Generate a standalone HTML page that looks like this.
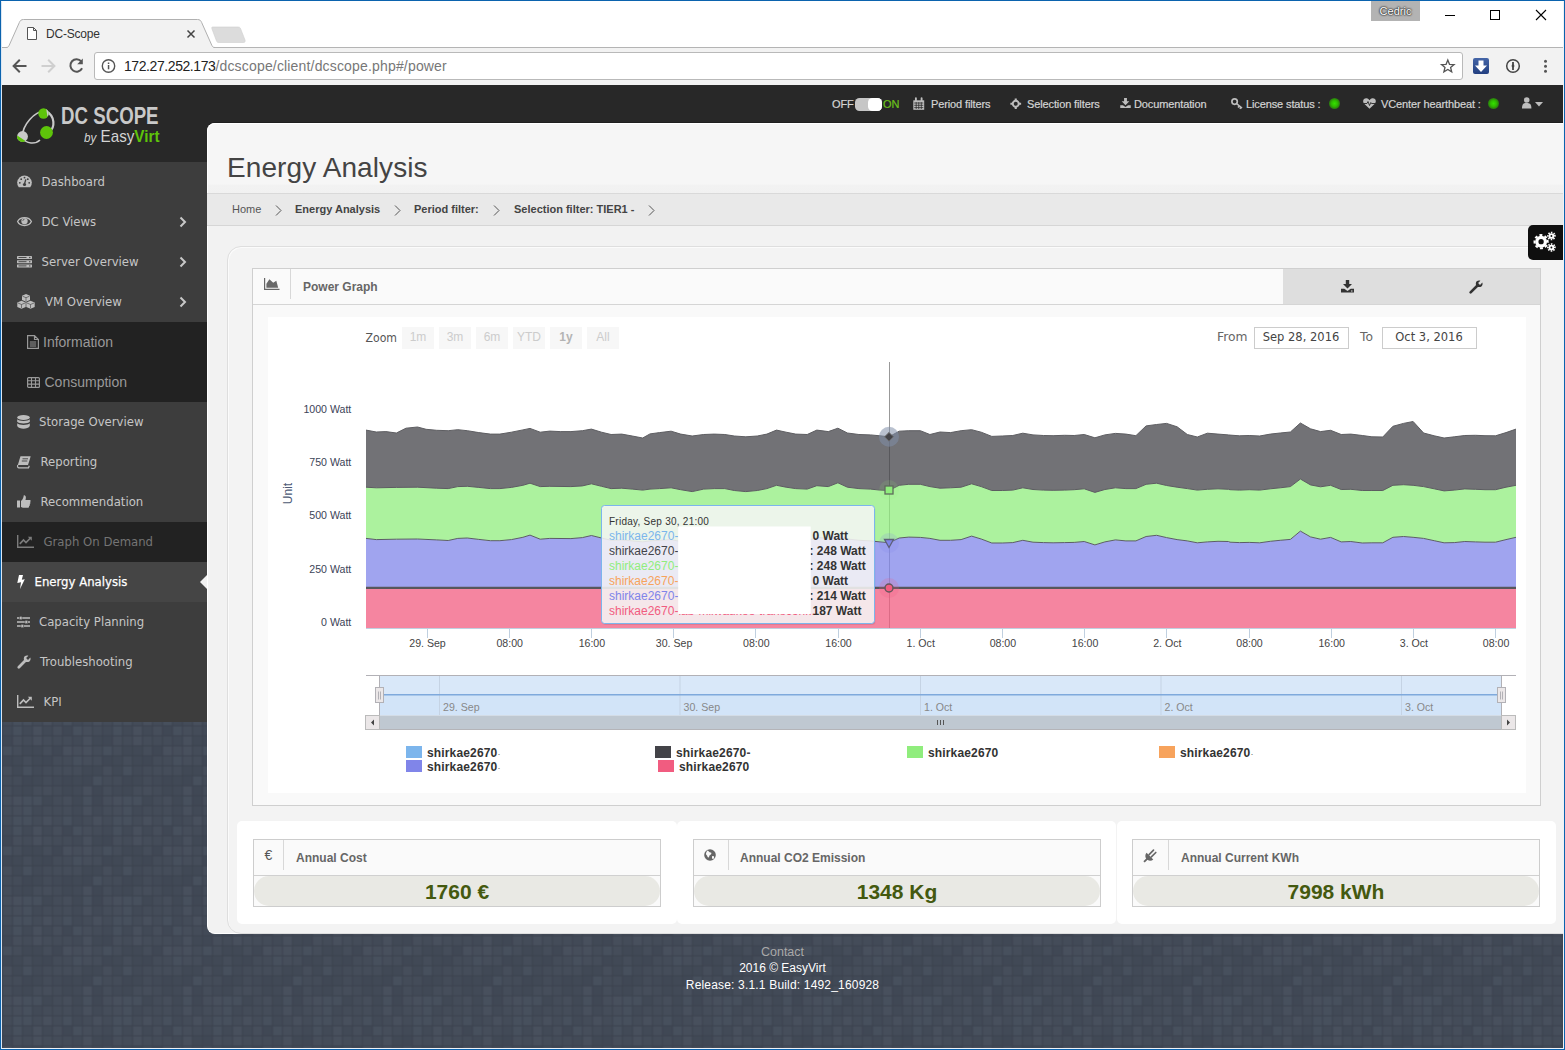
<!DOCTYPE html>
<html lang="en">
<head>
<meta charset="utf-8">
<title>DC-Scope</title>
<style>
*{box-sizing:border-box;margin:0;padding:0}
html,body{width:1565px;height:1050px;overflow:hidden;background:#434b58}
body{position:relative;font-family:"Liberation Sans",Arial,sans-serif;font-size:12px;color:#444}
.abs{position:absolute}
svg{display:block;overflow:visible}
#bgpat{position:absolute;left:0;top:0;width:1565px;height:1050px}
/* window frame */
#frame{position:absolute;left:0;top:0;width:1565px;height:1050px;border:1px solid #0b63ae;pointer-events:none;z-index:50}
#frame2{position:absolute;left:1px;top:1px;width:1563px;height:1048px;border:1px solid #eef2f7;border-left-color:#dbe7f3;border-top-color:transparent;pointer-events:none;z-index:49}
/* chrome */
#titlebar{position:absolute;left:1px;top:1px;width:1563px;height:46px;background:#fff}
#tabline{position:absolute;left:1px;top:47px;width:1563px;height:1px;background:#b4b4b4}
#toolbar{position:absolute;left:1px;top:48px;width:1563px;height:37px;background:#f2f2f2}
#urlbox{position:absolute;left:94px;top:52px;width:1369px;height:28px;background:#fff;border:1px solid #b9b9b9;border-radius:3px}
#url{position:absolute;left:124px;top:58px;font-size:14px;line-height:16px;color:#777;white-space:nowrap}
#url b{font-weight:normal;color:#222;letter-spacing:-0.42px}#url{letter-spacing:0.17px}
#tabtitle{position:absolute;left:46px;top:27px;font-size:12px;line-height:15px;letter-spacing:-0.2px;color:#333;white-space:nowrap}
#user{position:absolute;left:1371px;top:1px;width:49px;height:20px;background:#b3b3b3;color:#fff;font-size:11px;line-height:20px;text-align:center;text-shadow:0 0 2px #222,0 0 2px #333,0 0 1px #222}
/* app */
#header{position:absolute;left:2px;top:85px;width:1561px;height:52px;background:#282828}
#logo{position:absolute;left:2px;top:85px;width:205px;height:77px;background:#282828}
#sidebar{position:absolute;left:2px;top:162px;width:205px;height:560px;background:#3d3d3d}
.mi{position:absolute;left:0;width:205px;height:40px;color:#c6c6c6;font-family:"DejaVu Sans Condensed","DejaVu Sans",sans-serif;font-size:13px;line-height:40px;white-space:nowrap}
.mi span{position:absolute;top:0}
.mi svg{position:absolute}
.mi.dark{background:#222;color:#747474}
.mi.sub{background:#222;color:#999;font-family:"Liberation Sans",Arial,sans-serif;font-size:14px;letter-spacing:0}
.mi.act{background:#454545;color:#fff;-webkit-text-stroke:0.25px #fff}
.chev{position:absolute;left:177px;top:14px}
/* top nav */
.tn{position:absolute;top:97px;font-size:11px;line-height:14px;color:#d4d4d4;white-space:nowrap;letter-spacing:-0.12px;-webkit-text-stroke:0.2px #d4d4d4}
.dot{position:absolute;top:98px;width:11px;height:11px;border-radius:50%;background:radial-gradient(circle at 50% 50%,#35e000 0,#2ebc00 38%,#2a7410 72%,#2a3a1e 100%)}
/* content */
#content{position:absolute;left:207px;top:123px;width:1356px;height:811px;background:#f2f2f2;border-radius:8px 0 0 8px;border:1px solid #fff;border-right:0;box-shadow:0 -1px 0 rgba(25,25,25,0.6)}
#pagehead{position:absolute;left:-1px;top:-1px;width:1357px;height:71px;border-radius:8px 0 0 0;border-left:1px solid #fff;border-top:1px solid #fff;background:linear-gradient(#f6f6f6 0,#f6f6f6 86%,#f2f2f2 87%,#f1f1f1 100%)}
#pagehead h1{position:absolute;left:19px;top:28px;font-size:28px;line-height:32px;letter-spacing:0.1px;font-weight:normal;color:#444;white-space:nowrap}
#crumbs{position:absolute;left:-1px;top:69px;width:1357px;height:33px;background:#e9e9e9;border-top:1px solid #d9d9d9;border-bottom:1px solid #d6d6d6}
.cr{position:absolute;top:9px;font-size:11px;line-height:13px;color:#555;white-space:nowrap}
.cr.b{font-weight:bold;color:#444}
.crs{position:absolute;top:11px}
#box{position:absolute;left:19px;top:122px;box-shadow:inset 1px 1px 0 #fbfbfb;width:1350px;height:688px;border:1px solid #dedede;border-radius:14px 0 0 14px;background:#f3f3f3}
#panel{position:absolute;left:44px;top:144px;width:1289px;height:538px;border:1px solid #cfcfcf;background:#f9f9f9}
#phead{position:absolute;left:0;top:0;width:1287px;height:36px;background:#fafafa;border-bottom:1px solid #d5d5d5}
#phead .sep{position:absolute;left:37px;top:0;width:1px;height:30px;background:#d8d8d8}
#phead .ttl{position:absolute;left:50px;top:11px;font-size:12px;line-height:15px;font-weight:bold;color:#666}
#ptools{position:absolute;left:1030px;top:0;width:257px;height:35px;background:#dedede}
#chartbg{position:absolute;left:15px;top:48px;width:1258px;height:476px;background:#fff}
.stat{position:absolute;top:697px;height:103px;background:#fff;border-radius:5px}
.sbox{position:absolute;left:16px;top:18px;width:408px;height:68px;border:1px solid #cdcdcd;background:#fafafa}
.sbox .sep{position:absolute;left:29px;top:0;width:1px;height:30px;background:#d8d8d8}
.sbox .ttl{position:absolute;left:42px;top:11px;font-size:12px;line-height:15px;font-weight:bold;color:#666;white-space:nowrap}
.sbox .hr{position:absolute;left:0;top:35px;width:406px;height:1px;background:#d0d0d0}
.sbox .pill{position:absolute;left:0;top:36px;width:406px;height:30px;border-radius:15px;background:#e9e9e4;text-align:center;font-size:21px;line-height:31px;font-weight:bold;color:#44590f}
.foot{position:absolute;left:0;width:1565px;text-align:center;font-size:12px;line-height:15px;color:#fff;white-space:nowrap}
#gear{position:absolute;left:1528px;top:225px;width:35px;height:35px;background:#0f0f0f;border-radius:5px 0 0 5px}
/* chart text */
#chart text{font-family:"Liberation Sans",Arial,sans-serif}
#chart text.dj{font-family:"DejaVu Sans",Verdana,sans-serif}
</style>
</head>
<body>
<svg id="bgpat" width="1565" height="1050"><defs><pattern id="tiles" x="2.5" y="5.8" width="100" height="100" patternUnits="userSpaceOnUse"><rect width="100" height="100" fill="#3b424e"/><g><rect x="0.5" y="0.5" width="9" height="9" fill="#454d5a"/><rect x="10.5" y="0.5" width="9" height="9" fill="#464e5b"/><rect x="20.5" y="0.5" width="9" height="9" fill="#47505d"/><rect x="30.5" y="0.5" width="9" height="9" fill="#424a57"/><rect x="40.5" y="0.5" width="9" height="9" fill="#444c59"/><rect x="50.5" y="0.5" width="9" height="9" fill="#444c59"/><rect x="60.5" y="0.5" width="9" height="9" fill="#454d5a"/><rect x="70.5" y="0.5" width="9" height="9" fill="#424a57"/><rect x="80.5" y="0.5" width="9" height="9" fill="#48505d"/><rect x="90.5" y="0.5" width="9" height="9" fill="#424a57"/><rect x="0.5" y="10.5" width="9" height="9" fill="#444c59"/><rect x="10.5" y="10.5" width="9" height="9" fill="#47505d"/><rect x="20.5" y="10.5" width="9" height="9" fill="#47505d"/><rect x="30.5" y="10.5" width="9" height="9" fill="#444c59"/><rect x="40.5" y="10.5" width="9" height="9" fill="#48505d"/><rect x="50.5" y="10.5" width="9" height="9" fill="#444c59"/><rect x="60.5" y="10.5" width="9" height="9" fill="#47505d"/><rect x="70.5" y="10.5" width="9" height="9" fill="#424a57"/><rect x="80.5" y="10.5" width="9" height="9" fill="#444c59"/><rect x="90.5" y="10.5" width="9" height="9" fill="#48505d"/><rect x="0.5" y="20.5" width="9" height="9" fill="#424a57"/><rect x="10.5" y="20.5" width="9" height="9" fill="#47505d"/><rect x="20.5" y="20.5" width="9" height="9" fill="#424a57"/><rect x="30.5" y="20.5" width="9" height="9" fill="#48505d"/><rect x="40.5" y="20.5" width="9" height="9" fill="#424a57"/><rect x="50.5" y="20.5" width="9" height="9" fill="#464e5b"/><rect x="60.5" y="20.5" width="9" height="9" fill="#404855"/><rect x="70.5" y="20.5" width="9" height="9" fill="#47505d"/><rect x="80.5" y="20.5" width="9" height="9" fill="#464e5b"/><rect x="90.5" y="20.5" width="9" height="9" fill="#444c59"/><rect x="0.5" y="30.5" width="9" height="9" fill="#404855"/><rect x="10.5" y="30.5" width="9" height="9" fill="#464e5b"/><rect x="20.5" y="30.5" width="9" height="9" fill="#444c59"/><rect x="30.5" y="30.5" width="9" height="9" fill="#48505d"/><rect x="40.5" y="30.5" width="9" height="9" fill="#454d5a"/><rect x="50.5" y="30.5" width="9" height="9" fill="#444c59"/><rect x="60.5" y="30.5" width="9" height="9" fill="#444c59"/><rect x="70.5" y="30.5" width="9" height="9" fill="#424a57"/><rect x="80.5" y="30.5" width="9" height="9" fill="#48505d"/><rect x="90.5" y="30.5" width="9" height="9" fill="#414956"/><rect x="0.5" y="40.5" width="9" height="9" fill="#47505d"/><rect x="10.5" y="40.5" width="9" height="9" fill="#454d5a"/><rect x="20.5" y="40.5" width="9" height="9" fill="#414956"/><rect x="30.5" y="40.5" width="9" height="9" fill="#414956"/><rect x="40.5" y="40.5" width="9" height="9" fill="#454d5a"/><rect x="50.5" y="40.5" width="9" height="9" fill="#404855"/><rect x="60.5" y="40.5" width="9" height="9" fill="#48505d"/><rect x="70.5" y="40.5" width="9" height="9" fill="#464e5b"/><rect x="80.5" y="40.5" width="9" height="9" fill="#48505d"/><rect x="90.5" y="40.5" width="9" height="9" fill="#444c59"/><rect x="0.5" y="50.5" width="9" height="9" fill="#404855"/><rect x="10.5" y="50.5" width="9" height="9" fill="#414956"/><rect x="20.5" y="50.5" width="9" height="9" fill="#454d5a"/><rect x="30.5" y="50.5" width="9" height="9" fill="#414956"/><rect x="40.5" y="50.5" width="9" height="9" fill="#404855"/><rect x="50.5" y="50.5" width="9" height="9" fill="#444c59"/><rect x="60.5" y="50.5" width="9" height="9" fill="#444c59"/><rect x="70.5" y="50.5" width="9" height="9" fill="#47505d"/><rect x="80.5" y="50.5" width="9" height="9" fill="#464e5b"/><rect x="90.5" y="50.5" width="9" height="9" fill="#454d5a"/><rect x="0.5" y="60.5" width="9" height="9" fill="#464e5b"/><rect x="10.5" y="60.5" width="9" height="9" fill="#414956"/><rect x="20.5" y="60.5" width="9" height="9" fill="#47505d"/><rect x="30.5" y="60.5" width="9" height="9" fill="#424a57"/><rect x="40.5" y="60.5" width="9" height="9" fill="#444c59"/><rect x="50.5" y="60.5" width="9" height="9" fill="#454d5a"/><rect x="60.5" y="60.5" width="9" height="9" fill="#454d5a"/><rect x="70.5" y="60.5" width="9" height="9" fill="#454d5a"/><rect x="80.5" y="60.5" width="9" height="9" fill="#414956"/><rect x="90.5" y="60.5" width="9" height="9" fill="#414956"/><rect x="0.5" y="70.5" width="9" height="9" fill="#444c59"/><rect x="10.5" y="70.5" width="9" height="9" fill="#444c59"/><rect x="20.5" y="70.5" width="9" height="9" fill="#404855"/><rect x="30.5" y="70.5" width="9" height="9" fill="#414956"/><rect x="40.5" y="70.5" width="9" height="9" fill="#444c59"/><rect x="50.5" y="70.5" width="9" height="9" fill="#424a57"/><rect x="60.5" y="70.5" width="9" height="9" fill="#404855"/><rect x="70.5" y="70.5" width="9" height="9" fill="#414956"/><rect x="80.5" y="70.5" width="9" height="9" fill="#404855"/><rect x="90.5" y="70.5" width="9" height="9" fill="#47505d"/><rect x="0.5" y="80.5" width="9" height="9" fill="#454d5a"/><rect x="10.5" y="80.5" width="9" height="9" fill="#424a57"/><rect x="20.5" y="80.5" width="9" height="9" fill="#414956"/><rect x="30.5" y="80.5" width="9" height="9" fill="#454d5a"/><rect x="40.5" y="80.5" width="9" height="9" fill="#464e5b"/><rect x="50.5" y="80.5" width="9" height="9" fill="#444c59"/><rect x="60.5" y="80.5" width="9" height="9" fill="#414956"/><rect x="70.5" y="80.5" width="9" height="9" fill="#424a57"/><rect x="80.5" y="80.5" width="9" height="9" fill="#48505d"/><rect x="90.5" y="80.5" width="9" height="9" fill="#404855"/><rect x="0.5" y="90.5" width="9" height="9" fill="#464e5b"/><rect x="10.5" y="90.5" width="9" height="9" fill="#48505d"/><rect x="20.5" y="90.5" width="9" height="9" fill="#47505d"/><rect x="30.5" y="90.5" width="9" height="9" fill="#47505d"/><rect x="40.5" y="90.5" width="9" height="9" fill="#414956"/><rect x="50.5" y="90.5" width="9" height="9" fill="#444c59"/><rect x="60.5" y="90.5" width="9" height="9" fill="#464e5b"/><rect x="70.5" y="90.5" width="9" height="9" fill="#414956"/><rect x="80.5" y="90.5" width="9" height="9" fill="#47505d"/><rect x="90.5" y="90.5" width="9" height="9" fill="#404855"/></g></pattern></defs><rect width="1565" height="1050" fill="url(#tiles)"/></svg>

<!-- BROWSER CHROME -->
<div id="titlebar"></div>
<div id="tabline"></div>
<div id="toolbar"></div>
<svg class="abs" style="left:0;top:0" width="1565" height="90" viewBox="0 0 1565 90">
  <!-- tab -->
  <path d="M6 47.500 C7.600 47.500 8.400 47 9.100 45.500 L19.300 22.600 C20.200 20.500 21.200 19.500 23.500 19.500 L197.500 19.500 C199.800 19.500 200.800 20.500 201.700 22.600 L211.900 45.500 C212.600 47 213.400 47.500 215 47.500 L215 48.500 L6 48.500 Z" fill="#f2f2f2" stroke="none"/>
  <path d="M2 47.500 L6 47.500 C7.600 47.500 8.400 47 9.100 45.500 L19.300 22.600 C20.200 20.500 21.200 19.500 23.500 19.500 L197.500 19.500 C199.800 19.500 200.800 20.500 201.700 22.600 L211.900 45.500 C212.600 47 213.400 47.500 215 47.500" fill="none" stroke="#b0b0b0" stroke-width="1"/>
  <!-- new tab button -->
  <path d="M212.5 27 L238 27 C239.500 27 240 27.500 240.500 28.500 L245 40 C245.500 41.500 245 42.500 243.500 42.500 L219 42.500 C217.500 42.500 217 42 216.500 41 L212 29 C211.500 27.500 211.800 27 212.500 27 Z" fill="#dcdcdc" stroke="#cfcfcf" stroke-width="0.6"/>
  <!-- page icon -->
  <path d="M27.500 27.500 L33.500 27.500 L36.500 30.500 L36.500 39.500 L27.500 39.500 Z M33.500 27.500 L33.500 30.500 L36.500 30.500" fill="#fff" stroke="#555" stroke-width="1"/>
  <!-- tab close -->
  <path d="M187.500 30.500 L194.500 37.500 M194.500 30.500 L187.500 37.500" stroke="#444" stroke-width="1.5" fill="none"/>
  <!-- window controls -->
  <path d="M1445 15.500 H1455" stroke="#000" stroke-width="1"/>
  <rect x="1490.500" y="10.500" width="9" height="9" fill="none" stroke="#000" stroke-width="1"/>
  <path d="M1536 10 L1546 20 M1546 10 L1536 20" stroke="#000" stroke-width="1.100"/>
  <!-- nav arrows -->
  <path d="M26.500 66 H13.800 M19.800 59.800 L13.600 66 L19.800 72.200" fill="none" stroke="#555" stroke-width="2"/>
  <path d="M41.500 66 H54.200 M48.200 59.800 L54.400 66 L48.200 72.200" fill="none" stroke="#cfcfcf" stroke-width="2"/>
  <path d="M81.300 61.400 A6.200 6.200 0 1 0 82.100 68.300" fill="none" stroke="#555" stroke-width="2"/>
  <path d="M82.800 58.600 V64.200 H77.200 Z" fill="#555"/>
</svg>
<div id="tabtitle">DC-Scope</div>
<div id="user">Cedric</div>
<div id="urlbox"></div>
<svg class="abs" style="left:0;top:48px" width="1565" height="37" viewBox="0 48 1565 37">
  <circle cx="108.500" cy="66" r="6.200" fill="none" stroke="#555" stroke-width="1.400"/>
  <rect x="107.800" y="65" width="1.500" height="4.300" fill="#555"/><rect x="107.800" y="62.500" width="1.500" height="1.500" fill="#555"/>
  <path d="M1447.8 60.0 L1449.5 64.3 L1454.1 64.6 L1450.6 67.5 L1451.7 71.9 L1447.8 69.5 L1443.9 71.9 L1445.0 67.5 L1441.5 64.6 L1446.1 64.3 Z" fill="none" stroke="#555" stroke-width="1.300" stroke-linejoin="miter"/>
  <defs><linearGradient id="dlg" x1="0" y1="0" x2="0" y2="1"><stop offset="0" stop-color="#4566a8"/><stop offset="1" stop-color="#223f80"/></linearGradient></defs>
  <rect x="1473" y="58" width="16" height="16" rx="2" fill="url(#dlg)"/>
  <path d="M1478.500 60.500 H1483.500 V65.500 H1487 L1481 72 L1475 65.500 H1478.500 Z" fill="#fff"/>
  <circle cx="1513" cy="66" r="6.300" fill="none" stroke="#444" stroke-width="1.500"/>
  <path d="M1513 62 V70" stroke="#444" stroke-width="1.800"/><circle cx="1513" cy="66" r="1.400" fill="#444"/>
  <circle cx="1545.500" cy="61.200" r="1.500" fill="#555"/><circle cx="1545.500" cy="66.200" r="1.500" fill="#555"/><circle cx="1545.500" cy="71.200" r="1.500" fill="#555"/>
</svg>
<div id="url"><b>172.27.252.173</b>/dcscope/client/dcscope.php#/power</div>

<!-- APP HEADER -->
<div id="header"></div>
<div id="logo"></div>
<svg class="abs" style="left:14px;top:104px" width="44" height="44" viewBox="0 0 44 44">
  <path d="M8 33 C9 20 20 8 31 6.500" fill="none" stroke="#c9c9c9" stroke-width="1.600"/>
  <path d="M31 6.500 C42 12 41 24 35 28" fill="none" stroke="#c9c9c9" stroke-width="2.200"/>
  <path d="M8 33 C12 41 22 40 26 36" fill="none" stroke="#c9c9c9" stroke-width="1.600"/>
  <circle cx="29.500" cy="9.500" r="5.200" fill="#5ec40a"/>
  <path d="M32.200 5.100 A5.200 5.200 0 0 1 33.500 12.800 Z" fill="#c9c9c9"/>
  <circle cx="32.500" cy="28.500" r="6.400" fill="#5ec40a"/>
  <circle cx="8.500" cy="32.500" r="5.400" fill="#c9c9c9"/>
  <path d="M3.200 31.500 A5.400 5.400 0 0 0 11.500 37 Z" fill="#5ec40a"/>
</svg>
<div class="abs" id="lg1" style="left:61px;top:103px;font:bold 23.500px/26px 'Liberation Sans',Arial,sans-serif;color:#c9c9c9;white-space:nowrap;transform-origin:0 0;transform:scaleX(0.795)">DC SCOPE</div>
<div class="abs" id="lg2" style="left:84px;top:126.500px;font:17px/20px 'Liberation Sans',Arial,sans-serif;color:#d4d4d4;white-space:nowrap;transform-origin:0 0;transform:scaleX(0.895)"><i style="font-size:13px">by</i> Easy<b style="color:#5ec40a">Virt</b></div>

<div class="tn" style="left:832px">OFF</div>
<div class="abs" style="left:855px;top:98px;width:27px;height:13px;border-radius:4.500px;background:#c6c6c6"></div>
<div class="abs" style="left:868px;top:98px;width:14px;height:13px;border-radius:4.500px;background:#fff"></div>
<div class="tn" style="left:883px;color:#6cc11b;-webkit-text-stroke-color:#6cc11b">ON</div>
<svg class="abs" style="left:913px;top:98px" width="11.500" height="12" viewBox="0 0 11.500 12"><path d="M0.300 2.300 H11.200 V11.800 H0.300 Z" fill="#bdbdbd"/><path d="M2.900 0.200 V3 M8.600 0.200 V3" stroke="#bdbdbd" stroke-width="1.900" stroke-linecap="round"/><path d="M1.200 5 H10.300 M1.200 7.300 H10.300 M1.200 9.600 H10.300 M3.200 4.200 V11 M5.750 4.200 V11 M8.300 4.200 V11" stroke="#282828" stroke-width="0.750"/></svg>
<div class="tn" style="left:931px">Period filters</div>
<svg class="abs" style="left:1010px;top:98px" width="11.500" height="11.500" viewBox="0 0 12 12"><circle cx="6" cy="6" r="3.100" fill="none" stroke="#bdbdbd" stroke-width="2.100"/><path d="M6 0.400 V3 M6 9 V11.600 M0.400 6 H3 M9 6 H11.600" stroke="#bdbdbd" stroke-width="2.200"/></svg>
<div class="tn" style="left:1027px">Selection filters</div>
<svg class="abs" style="left:1120px;top:98px" width="11" height="10.500" viewBox="0 0 11 11"><path d="M4 0 H7 V3.500 H9.500 L5.500 7.500 L1.500 3.500 H4 Z" fill="#bdbdbd"/><path d="M0 7.500 H2.800 L5.500 9.300 L8.200 7.500 H11 V10.500 H0 Z" fill="#bdbdbd"/></svg>
<div class="tn" style="left:1134px">Documentation</div>
<svg class="abs" style="left:1231px;top:98px" width="12" height="12" viewBox="0 0 12 12"><circle cx="3.600" cy="3.600" r="2.700" fill="none" stroke="#bdbdbd" stroke-width="1.700"/><path d="M5.500 5.500 L11 10.200 M8.300 8 L7 9.500 M10 9.400 L8.800 10.800" stroke="#bdbdbd" stroke-width="1.600" fill="none"/></svg>
<div class="tn" style="left:1246px">License status :</div>
<div class="dot" style="left:1329px"></div>
<svg class="abs" style="left:1363px;top:98px" width="13" height="11" viewBox="0 0 13 11"><path d="M6.500 10.800 L1.200 5.800 C-1.200 3 1 -0.300 3.600 0.300 C5 0.500 6 1.500 6.500 2.300 C7 1.500 8 0.500 9.400 0.300 C12 -0.300 14.200 3 11.800 5.800 Z" fill="#bdbdbd"/><path d="M0.500 5.500 H4 L5 3.500 L6.500 7.500 L7.800 4.500 L8.500 5.500 H12.500" fill="none" stroke="#282828" stroke-width="0.900"/></svg>
<div class="tn" style="left:1381px">VCenter hearthbeat :</div>
<div class="dot" style="left:1488px"></div>
<svg class="abs" style="left:1522px;top:97px" width="22" height="12" viewBox="0 0 22 12"><circle cx="4.700" cy="3" r="2.800" fill="#bdbdbd"/><path d="M0 11.500 C0 6.500 2 6 4.700 6 C7.400 6 9.400 6.500 9.400 11.500 Z" fill="#bdbdbd"/><path d="M13 5 H21 L17 9.500 Z" fill="#bdbdbd"/></svg>

<div id="sidebar">
  <div class="mi" style="top:0"><svg style="left:15px;top:13px" width="15" height="13" viewBox="0 0 15 13"><path d="M1.750 12.300 A7.300 7.300 0 1 1 13.250 12.300 Z" fill="#bdbdbd"/><path d="M7.500 9 L8.800 4.300" stroke="#3d3d3d" stroke-width="1.300"/><circle cx="7.500" cy="9.500" r="1.600" fill="#3d3d3d"/><circle cx="2.800" cy="7.800" r="0.900" fill="#3d3d3d"/><circle cx="4.200" cy="4.200" r="0.900" fill="#3d3d3d"/><circle cx="12.200" cy="7.800" r="0.900" fill="#3d3d3d"/><circle cx="10.800" cy="4.200" r="0.900" fill="#3d3d3d"/><circle cx="7.500" cy="2.600" r="0.900" fill="#3d3d3d"/></svg><span style="left:39.500px">Dashboard</span></div>
  <div class="mi" style="top:40px"><svg style="left:15px;top:14px" width="15" height="11" viewBox="0 0 15 11"><path d="M0.600 5.500 C3 0.200 12 0.200 14.400 5.500 C12 10.800 3 10.800 0.600 5.500 Z" fill="none" stroke="#bdbdbd" stroke-width="1.300"/><circle cx="7.500" cy="5.100" r="3.200" fill="#bdbdbd"/><path d="M5.800 4.800 A1.900 1.900 0 0 1 7.500 3.200" fill="none" stroke="#3d3d3d" stroke-width="0.800"/></svg><span style="left:39.500px">DC Views</span><svg class="chev" width="8" height="12" viewBox="0 0 8 12"><path d="M1.500 1.500 L6 6 L1.500 10.500" fill="none" stroke="#c8c8c8" stroke-width="2"/></svg></div>
  <div class="mi" style="top:80px"><svg style="left:15px;top:13.500px" width="15" height="11.400" viewBox="0 0 15 11.400"><rect x="0" y="0" width="15" height="3" rx="0.400" fill="#bdbdbd"/><rect x="0" y="4.200" width="15" height="3" rx="0.400" fill="#bdbdbd"/><rect x="0" y="8.400" width="15" height="3" rx="0.400" fill="#bdbdbd"/><path d="M1.500 1.500 H9.500 M1.500 5.700 H9.500 M1.500 9.900 H9.500" stroke="#3d3d3d" stroke-width="0.900"/><circle cx="12.800" cy="1.500" r="0.700" fill="#3d3d3d"/><circle cx="12.800" cy="5.700" r="0.700" fill="#3d3d3d"/><circle cx="12.800" cy="9.900" r="0.700" fill="#3d3d3d"/></svg><span style="left:39.500px">Server Overview</span><svg class="chev" width="8" height="12" viewBox="0 0 8 12"><path d="M1.500 1.500 L6 6 L1.500 10.500" fill="none" stroke="#c8c8c8" stroke-width="2"/></svg></div>
  <div class="mi" style="top:120px"><svg style="left:15px;top:11.500px" width="18" height="15" viewBox="0 0 18 15"><path d="M9 0 L13 1.800 V6 L9 7.800 L5 6 V1.800 Z" fill="#bdbdbd"/><path d="M4.500 6.800 L8.700 8.600 V13 L4.500 14.800 L0.300 13 V8.600 Z" fill="#bdbdbd"/><path d="M13.500 6.800 L17.700 8.600 V13 L13.500 14.800 L9.300 13 V8.600 Z" fill="#bdbdbd"/><path d="M5.500 2.200 L9 3.700 L12.500 2.200 M9 3.700 V7 M1 9 L4.500 10.500 L8 9 M4.500 10.500 V14 M10 9 L13.500 10.500 L17 9 M13.500 10.500 V14" fill="none" stroke="#3d3d3d" stroke-width="0.600"/></svg><span style="left:43px">VM Overview</span><svg class="chev" width="8" height="12" viewBox="0 0 8 12"><path d="M1.500 1.500 L6 6 L1.500 10.500" fill="none" stroke="#c8c8c8" stroke-width="2"/></svg></div>
  <div class="mi sub" style="top:160px"><svg style="left:25px;top:13px" width="12" height="14" viewBox="0 0 12 14"><path d="M0.600 0.600 H7.500 L11.400 4.500 V13.400 H0.600 Z M7.500 0.600 V4.500 H11.400" fill="none" stroke="#999" stroke-width="1.200"/><path d="M2.800 7 H9.200 M2.800 9 H9.200 M2.800 11 H9.200" stroke="#999" stroke-width="1"/></svg><span style="left:41px">Information</span></div>
  <div class="mi sub" style="top:200px"><svg style="left:25px;top:15px" width="13" height="11" viewBox="0 0 13 11"><rect x="0.600" y="0.600" width="11.800" height="9.800" rx="1" fill="none" stroke="#999" stroke-width="1.200"/><path d="M0.600 3.800 H12.400 M0.600 7.100 H12.400 M4.500 0.600 V10.400 M8.500 0.600 V10.400" stroke="#999" stroke-width="1.100"/></svg><span style="left:42.500px">Consumption</span></div>
  <div class="mi" style="top:240px"><svg style="left:15px;top:13px" width="13" height="14" viewBox="0 0 13 14"><ellipse cx="6.500" cy="2.500" rx="6.300" ry="2.400" fill="#bdbdbd"/><path d="M0.200 4.300 C2 6.500 11 6.500 12.800 4.300 V6.800 C11 9 2 9 0.200 6.800 Z" fill="#bdbdbd"/><path d="M0.200 8.300 C2 10.500 11 10.500 12.800 8.300 V11 C11 14.700 2 14.700 0.200 11 Z" fill="#bdbdbd"/></svg><span style="left:37px">Storage Overview</span></div>
  <div class="mi" style="top:280px"><svg style="left:15px;top:14px" width="14" height="12" viewBox="0 0 14 12"><path d="M3.500 0.300 H13.700 L11 9 H0.800 Z" fill="#bdbdbd"/><path d="M0.800 9 C0 11 1 11.800 2 11.800 H11.500 L12.300 9.800" fill="none" stroke="#bdbdbd" stroke-width="1.200"/><path d="M5.500 2.800 H11 M4.800 5 H10.300" stroke="#3d3d3d" stroke-width="0.900"/></svg><span style="left:38.500px">Reporting</span></div>
  <div class="mi" style="top:320px"><svg style="left:15px;top:13px" width="14" height="13" viewBox="0 0 14 13"><rect x="0" y="5.500" width="3" height="7" fill="#bdbdbd"/><path d="M4 6 C6 4.500 6.500 2.500 6.800 0.300 C9 0.300 9.300 2.500 8.500 5 H12.800 C14 5 14 6.800 13 7 C13.800 7.500 13.600 8.800 12.600 9 C13.200 9.600 13 10.800 12 11 C12.400 11.800 11.800 12.800 10.500 12.800 H6.500 C5.500 12.800 5 12.300 4 12 Z" fill="#bdbdbd"/></svg><span style="left:38.500px">Recommendation</span></div>
  <div class="mi dark" style="top:360px"><svg style="left:15px;top:13px" width="17" height="13" viewBox="0 0 17 13"><path d="M0.700 0 V12.300 H17" fill="none" stroke="#7c7c7c" stroke-width="1.400"/><path d="M2.800 8.800 L6.500 5 L9 7.500 L13.500 3" fill="none" stroke="#7c7c7c" stroke-width="1.700"/><path d="M10.800 1.800 H14.800 V5.800 Z" fill="#7c7c7c"/></svg><span style="left:41.500px">Graph On Demand</span></div>
  <div class="mi act" style="top:400px"><svg style="left:15px;top:13px" width="8" height="14" viewBox="0 0 8 14"><path d="M2 0 H6 L4.800 4.800 L7.800 4.200 L3 14 L4 7.200 L0.300 8 Z" fill="#fff"/></svg><span style="left:32.500px">Energy Analysis</span><svg style="left:198px;top:13px" width="7" height="14" viewBox="0 0 7 14"><path d="M7 0 L0 7 L7 14 Z" fill="#f2f2f2"/></svg></div>
  <div class="mi" style="top:440px"><svg style="left:15px;top:14px" width="13" height="12" viewBox="0 0 13 12"><path d="M0 2 H13 M0 6 H13 M0 10 H13" stroke="#bdbdbd" stroke-width="1.300"/><rect x="2.500" y="0.300" width="2.500" height="3.400" fill="#bdbdbd" stroke="#3d3d3d" stroke-width="0.500"/><rect x="8" y="4.300" width="2.500" height="3.400" fill="#bdbdbd" stroke="#3d3d3d" stroke-width="0.500"/><rect x="4" y="8.300" width="2.500" height="3.400" fill="#bdbdbd" stroke="#3d3d3d" stroke-width="0.500"/></svg><span style="left:37px">Capacity Planning</span></div>
  <div class="mi" style="top:480px"><svg style="left:15px;top:13px" width="14" height="14" viewBox="0 0 14 14"><path d="M1.800 12.200 L8.200 5.800" stroke="#bdbdbd" stroke-width="2.800" stroke-linecap="round"/><path d="M13.300 2.600 L11 4.900 L9.100 3 L11.400 0.700 C9.600 0 7.600 0.600 7 2.400 C6.500 3.900 7 5.400 8 6.200 C9.200 7.200 11 7.400 12.400 6.400 C13.700 5.400 13.800 3.800 13.300 2.600 Z" fill="#bdbdbd"/></svg><span style="left:38px">Troubleshooting</span></div>
  <div class="mi" style="top:520px"><svg style="left:15px;top:13px" width="17" height="13" viewBox="0 0 17 13"><path d="M0.700 0 V12.300 H17" fill="none" stroke="#bdbdbd" stroke-width="1.400"/><path d="M2.800 8.800 L6.500 5 L9 7.500 L13.500 3" fill="none" stroke="#bdbdbd" stroke-width="1.700"/><path d="M10.800 1.800 H14.800 V5.800 Z" fill="#bdbdbd"/></svg><span style="left:41.500px">KPI</span></div>
</div>

<div id="content">
  <div id="pagehead"><h1>Energy Analysis</h1></div>
  <div id="crumbs">
    <div class="cr" style="left:25px">Home</div>
    <svg class="crs" style="left:68px" width="7" height="11" viewBox="0 0 7 11"><path d="M1 0.500 L6 5.500 L1 10.500" fill="none" stroke="#555" stroke-width="1"/></svg>
    <div class="cr b" style="left:88px">Energy Analysis</div>
    <svg class="crs" style="left:187px" width="7" height="11" viewBox="0 0 7 11"><path d="M1 0.500 L6 5.500 L1 10.500" fill="none" stroke="#555" stroke-width="1"/></svg>
    <div class="cr b" style="left:207px">Period filter:</div>
    <svg class="crs" style="left:286px" width="7" height="11" viewBox="0 0 7 11"><path d="M1 0.500 L6 5.500 L1 10.500" fill="none" stroke="#555" stroke-width="1"/></svg>
    <div class="cr b" style="left:307px">Selection filter: TIER1 -</div>
    <svg class="crs" style="left:441px" width="7" height="11" viewBox="0 0 7 11"><path d="M1 0.500 L6 5.500 L1 10.500" fill="none" stroke="#555" stroke-width="1"/></svg>
  </div>
  <div id="box"></div>
  <div id="panel">
    <div id="phead">
      <svg class="abs" style="left:11px;top:9px" width="15" height="12" viewBox="0 0 15 12"><path d="M0.600 0 V11.400 H15.500" fill="none" stroke="#666" stroke-width="1.200"/><path d="M2.400 9.800 V5.800 L5.400 1.200 L9.200 4.800 L12.300 2.800 L14.200 9.800 Z" fill="#696969"/></svg>
      <div class="sep"></div>
      <div class="ttl">Power Graph</div>
      <div id="ptools">
        <svg class="abs" style="left:58px;top:11px" width="13" height="13" viewBox="0 0 13 13"><path d="M4.800 0 H8.200 V4 H11 L6.500 8.500 L2 4 H4.800 Z" fill="#333"/><path d="M0 8.800 H3.300 L6.500 11 L9.700 8.800 H13 V12.600 H0 Z" fill="#333"/><rect x="10" y="10.500" width="1.500" height="1" fill="#dedede"/></svg>
        <svg class="abs" style="left:186px;top:11px" width="14" height="14" viewBox="0 0 14 14"><path d="M1.600 12.400 L8 6" stroke="#333" stroke-width="2.600" stroke-linecap="round"/><path d="M13.300 2.600 L11 4.900 L9.100 3 L11.400 0.700 C9.600 0 7.600 0.600 7 2.400 C6.500 3.900 7 5.400 8 6.200 C9.200 7.200 11 7.400 12.400 6.400 C13.700 5.400 13.800 3.800 13.300 2.600 Z" fill="#333"/></svg>
      </div>
    </div>
    <div id="chartbg"></div>
  </div>
  <div class="stat" style="left:29px;width:439.500px"><div class="sbox">
    <div class="abs" style="left:10.500px;top:6px;font-size:14px;line-height:18px;color:#555">€</div>
    <div class="sep"></div><div class="ttl">Annual Cost</div><div class="hr"></div><div class="pill">1760 €</div></div></div>
  <div class="stat" style="left:469px;width:439px"><div class="sbox">
    <svg class="abs" style="left:10px;top:9px" width="12" height="12" viewBox="0 0 12 12"><circle cx="6" cy="6" r="5.800" fill="#666"/><path d="M3.500 1.500 C5 2 5 3.500 6.500 3.500 C8 3.500 7.500 5.500 6 6 C5 6.500 5.500 8 4.500 8.500 C3.500 9 3.500 6.500 2.500 6 C1.500 5.500 2 3 3.500 1.500 Z M8 7.500 C9.500 6.500 10.500 7.500 10 9 C9.500 10.500 8 10 8 9 Z" fill="#fafafa"/></svg>
    <div class="sep" style="left:34px"></div><div class="ttl" style="left:46px">Annual CO2 Emission</div><div class="hr"></div><div class="pill">1348 Kg</div></div></div>
  <div class="stat" style="left:909px;width:438.500px"><div class="sbox" style="left:15px">
    <svg class="abs" style="left:10px;top:7px" width="16" height="16" viewBox="0 0 15.500 15.500"><path d="M1 14.500 L5 10.500" stroke="#666" stroke-width="1.800"/><path d="M3.450 5.550 L9.950 12.050 A4.600 4.600 0 0 1 3.450 5.550 Z" fill="#666"/><path d="M5.900 7.400 L10.200 3.100 M8.100 9.600 L12.400 5.300" stroke="#666" stroke-width="1.600" stroke-linecap="round"/></svg>
    <div class="sep" style="left:35px"></div><div class="ttl" style="left:48px">Annual Current KWh</div><div class="hr"></div><div class="pill">7998 kWh</div></div></div>
</div>
<div id="gear"><svg class="abs" style="left:0;top:0" width="35" height="35" viewBox="0 0 35 35">
  <g fill="none" stroke="#fff">
    <circle cx="13.100" cy="16.700" r="4.300" stroke-width="3.300"/>
    <circle cx="13.100" cy="16.700" r="6.600" stroke-width="2" stroke-dasharray="2.900 2.283" transform="rotate(-16 13.100 16.700)"/>
    <circle cx="23.400" cy="11" r="1.900" stroke-width="1.900"/>
    <circle cx="23.400" cy="11" r="3.500" stroke-width="1.700" stroke-dasharray="1.450 1.299" transform="rotate(-15 23.400 11)"/>
    <circle cx="23.400" cy="22.500" r="1.900" stroke-width="1.900"/>
    <circle cx="23.400" cy="22.500" r="3.500" stroke-width="1.700" stroke-dasharray="1.450 1.299" transform="rotate(-15 23.400 22.500)"/>
  </g></svg></div>
<svg id="chart" class="abs" style="left:0;top:0" width="1565" height="1050" viewBox="0 0 1565 1050">
<g font-size="12" fill="#555" style="font-family:'DejaVu Sans',Verdana,sans-serif"><text class="dj" x="365.500" y="341.700" textLength="31.500" lengthAdjust="spacingAndGlyphs">Zoom</text></g>
<rect x="402" y="327" width="32" height="22" fill="#f7f7f7"/>
<text x="418" y="341" text-anchor="middle" font-size="12" fill="#cccccc">1m</text>
<rect x="439" y="327" width="32" height="22" fill="#f7f7f7"/>
<text x="455" y="341" text-anchor="middle" font-size="12" fill="#cccccc">3m</text>
<rect x="476" y="327" width="32" height="22" fill="#f7f7f7"/>
<text x="492" y="341" text-anchor="middle" font-size="12" fill="#cccccc">6m</text>
<rect x="513" y="327" width="32" height="22" fill="#f7f7f7"/>
<text x="529" y="341" text-anchor="middle" font-size="12" fill="#cccccc">YTD</text>
<rect x="550" y="327" width="32" height="22" fill="#f7f7f7"/>
<text x="566" y="341" text-anchor="middle" font-size="12" font-weight="bold" fill="#b4b4b4">1y</text>
<rect x="587" y="327" width="32" height="22" fill="#f7f7f7"/>
<text x="603" y="341" text-anchor="middle" font-size="12" fill="#cccccc">All</text>
<g font-size="11.500" style="font-family:'DejaVu Sans',Verdana,sans-serif"><text class="dj" x="1217" y="341" font-size="12.300" fill="#666">From</text><text class="dj" x="1360" y="341" font-size="12.300" fill="#666">To</text>
<rect x="1254.500" y="327.500" width="94" height="21" fill="#fff" stroke="#cccccc"/><rect x="1382.500" y="327.500" width="94" height="21" fill="#fff" stroke="#cccccc"/>
<text class="dj" x="1301" y="341" text-anchor="middle" fill="#444">Sep 28, 2016</text><text class="dj" x="1429" y="341" text-anchor="middle" fill="#444">Oct 3, 2016</text></g>
<text transform="translate(292 493.500) rotate(-90)" text-anchor="middle" font-size="12" fill="#4d5a75">Unit</text>
<text x="351.300" y="625.9" text-anchor="end" font-size="10.600" fill="#3c4458">0 Watt</text>
<text x="351.300" y="572.6" text-anchor="end" font-size="10.600" fill="#3c4458">250 Watt</text>
<text x="351.300" y="519.4" text-anchor="end" font-size="10.600" fill="#3c4458">500 Watt</text>
<text x="351.300" y="466.1" text-anchor="end" font-size="10.600" fill="#3c4458">750 Watt</text>
<text x="351.300" y="412.9" text-anchor="end" font-size="10.600" fill="#3c4458">1000 Watt</text>
<path d="M889.500 362 V628" stroke="#999" stroke-width="1"/>
<path d="M366 588 L1516 588 L1516 628 L366 628 Z" fill="#f15c80" fill-opacity="0.750"/>
<path d="M366 538.4 L376.3 539.6 L396.4 539.2 L417.5 539 L436.7 539.9 L448.2 540.5 L457.8 538.4 L467.3 538 L478.8 539.4 L490.4 540.7 L499.9 540.7 L511.4 539.6 L522.9 537.3 L530 535.1 L540.2 539.2 L549.8 538.4 L570.9 538.6 L582.4 537.6 L591.4 535.5 L601.5 538 L611.1 540.3 L621.7 539.9 L632.2 540.9 L642.7 541.9 L650 540.9 L659.6 540.3 L671.1 539.6 L680.7 541.5 L692.2 543.4 L703.7 540.9 L714.2 540.3 L724.8 540.3 L734.3 542.2 L745.8 543.4 L757.3 542.2 L766.9 540.3 L776.5 537.1 L786.1 539 L795.7 540.3 L807.2 540.9 L816.8 537.4 L828.3 538.4 L837.9 534.6 L847.4 539 L858.9 540.3 L870.4 540.9 L880 541.9 L889 542.8 L899.2 538 L908.8 537.1 L920.3 537.4 L929.9 538.4 L940 540.3 L950.5 540.3 L961.1 539.6 L971.6 536.1 L981.2 539 L991.8 543 L1002.3 543 L1012.8 542.6 L1022.8 540.3 L1033 542.2 L1043.5 542.6 L1053.1 542.8 L1064.6 542.6 L1074.2 542.4 L1084.2 541.5 L1094.9 544.9 L1104.9 541.9 L1115.4 539.9 L1125.9 540.9 L1135.9 540.9 L1146.1 536.5 L1156.6 535.3 L1166.6 537.6 L1177.1 539.6 L1187.3 540.9 L1197.3 542.8 L1207.4 541.9 L1218 541.3 L1228.5 541.5 L1230 542.2 L1239.6 542.6 L1249.2 542.4 L1259.7 542.8 L1270.3 541.3 L1280.2 540.3 L1290.4 539.4 L1300.4 531.1 L1310.5 536.9 L1320.5 539.2 L1330.6 537.4 L1341.2 541.9 L1350.8 541.5 L1362.3 543 L1371.9 542.8 L1382.8 542.8 L1392.9 537.3 L1403.5 536.5 L1413.1 537.3 L1423.6 538.4 L1434.2 540.7 L1444.1 542.8 L1454.3 542.6 L1464.8 541.5 L1475.4 541.9 L1485 542.2 L1495.5 542.2 L1506 539.6 L1516 537.3 L1516 588 L366 588 Z" fill="#8085e9" fill-opacity="0.750"/>
<path d="M366 487.2 L376.3 487.8 L396.4 487.4 L417.5 487.2 L436.7 488.2 L448.2 488.6 L457.8 486.6 L467.3 486.3 L478.8 487.4 L490.4 488.6 L499.9 488.6 L511.4 487.4 L522.9 485.3 L530 483.2 L540.2 486.6 L549.8 486.3 L570.9 486.6 L582.4 485.9 L591.4 483.8 L601.5 486.3 L611.1 488.6 L621.7 488.2 L632.2 489.1 L642.7 490.1 L650 489.1 L659.6 488.6 L671.1 487.8 L680.7 489.7 L692.2 491.6 L703.7 489.1 L714.2 488.6 L724.8 488.6 L734.3 490.5 L745.8 491.6 L757.3 490.5 L766.9 488.6 L776.5 485.3 L786.1 487.2 L795.7 488.6 L807.2 489.1 L816.8 485.7 L828.3 486.6 L837.9 482.8 L847.4 487.2 L858.9 488.6 L870.4 489.1 L880 490.1 L889 490.5 L899.2 485.3 L908.8 484.3 L920.3 484.3 L929.9 486.6 L940 488.2 L950.5 487.8 L961.1 487.2 L971.6 483.8 L981.2 486.6 L991.8 490.5 L1002.3 490.5 L1012.8 490.1 L1022.8 487.8 L1033 489.5 L1043.5 490.1 L1053.1 490.3 L1064.6 490.1 L1074.2 489.7 L1084.2 488.8 L1094.9 492.4 L1104.9 489.5 L1115.4 487.8 L1125.9 488.6 L1135.9 488.6 L1146.1 484.3 L1156.6 483.2 L1166.6 485.5 L1177.1 487.2 L1187.3 488.6 L1197.3 490.1 L1207.4 489.3 L1218 488.8 L1228.5 489.3 L1230 489.7 L1239.6 490.1 L1249.2 489.7 L1259.7 490.1 L1270.3 488.8 L1280.2 487.8 L1290.4 486.6 L1300.4 479 L1310.5 484.9 L1320.5 486.8 L1330.6 485.3 L1341.2 489.5 L1350.8 489.3 L1362.3 490.5 L1371.9 490.5 L1382.8 490.5 L1392.9 485.3 L1403.5 484.7 L1413.1 485.3 L1423.6 486.6 L1434.2 488.8 L1444.1 490.9 L1454.3 490.1 L1464.8 488.9 L1475.4 489.3 L1485 489.7 L1495.5 489.7 L1506 487.2 L1516 485.3 L1516 537.3 L1506 539.6 L1495.5 542.2 L1485 542.2 L1475.4 541.9 L1464.8 541.5 L1454.3 542.6 L1444.1 542.8 L1434.2 540.7 L1423.6 538.4 L1413.1 537.3 L1403.5 536.5 L1392.9 537.3 L1382.8 542.8 L1371.9 542.8 L1362.3 543 L1350.8 541.5 L1341.2 541.9 L1330.6 537.4 L1320.5 539.2 L1310.5 536.9 L1300.4 531.1 L1290.4 539.4 L1280.2 540.3 L1270.3 541.3 L1259.7 542.8 L1249.2 542.4 L1239.6 542.6 L1230 542.2 L1228.5 541.5 L1218 541.3 L1207.4 541.9 L1197.3 542.8 L1187.3 540.9 L1177.1 539.6 L1166.6 537.6 L1156.6 535.3 L1146.1 536.5 L1135.9 540.9 L1125.9 540.9 L1115.4 539.9 L1104.9 541.9 L1094.9 544.9 L1084.2 541.5 L1074.2 542.4 L1064.6 542.6 L1053.1 542.8 L1043.5 542.6 L1033 542.2 L1022.8 540.3 L1012.8 542.6 L1002.3 543 L991.8 543 L981.2 539 L971.6 536.1 L961.1 539.6 L950.5 540.3 L940 540.3 L929.9 538.4 L920.3 537.4 L908.8 537.1 L899.2 538 L889 542.8 L880 541.9 L870.4 540.9 L858.9 540.3 L847.4 539 L837.9 534.6 L828.3 538.4 L816.8 537.4 L807.2 540.9 L795.7 540.3 L786.1 539 L776.5 537.1 L766.9 540.3 L757.3 542.2 L745.8 543.4 L734.3 542.2 L724.8 540.3 L714.2 540.3 L703.7 540.9 L692.2 543.4 L680.7 541.5 L671.1 539.6 L659.6 540.3 L650 540.9 L642.7 541.9 L632.2 540.9 L621.7 539.9 L611.1 540.3 L601.5 538 L591.4 535.5 L582.4 537.6 L570.9 538.6 L549.8 538.4 L540.2 539.2 L530 535.1 L522.9 537.3 L511.4 539.6 L499.9 540.7 L490.4 540.7 L478.8 539.4 L467.3 538 L457.8 538.4 L448.2 540.5 L436.7 539.9 L417.5 539 L396.4 539.2 L376.3 539.6 L366 538.4 Z" fill="#90ed7d" fill-opacity="0.750"/>
<path d="M366 430.1 L376.3 432 L385.9 431.6 L396.4 433 L406 428.2 L417.5 427 L426.1 429.3 L436.7 430.3 L448.2 430.7 L457.8 429.7 L467.3 430.7 L478.8 432.6 L490.4 434.1 L499.9 434.1 L511.4 432.2 L522.9 429.9 L530 428.4 L540.2 432.2 L549.8 431.1 L560.3 431.6 L570.9 431.6 L582.4 430.7 L591.4 429.1 L601.5 432.2 L611.1 434.5 L621.7 434.1 L632.2 436 L642.7 438 L650 433.9 L659.6 432.6 L671.1 431.2 L680.7 434.1 L692.2 436 L703.7 434.5 L714.2 434.1 L724.8 434.5 L734.3 436 L745.8 436.8 L757.3 436 L766.9 434.1 L776.5 430.1 L786.1 432.2 L795.7 434.1 L807.2 434.5 L816.8 430.1 L828.3 431.6 L837.9 428.2 L847.4 433 L858.9 434.5 L870.4 434.9 L880 435.8 L889 436.8 L899.2 431.2 L908.8 430.7 L920.3 430.7 L929.9 434.5 L940 432 L950.5 432.6 L961.1 430.7 L971.6 429.7 L981.2 432.2 L991.8 436.4 L1002.3 436 L1012.8 435.5 L1022.8 433.2 L1033 434.9 L1043.5 435.5 L1053.1 435.7 L1064.6 435.3 L1074.2 435.5 L1084.2 434.5 L1094.9 437.8 L1104.9 434.9 L1115.4 433.4 L1125.9 434.1 L1135.9 435.7 L1146.1 425.9 L1156.6 424.5 L1166.6 423.4 L1177.1 426.8 L1187.3 434.5 L1197.3 437 L1207.4 433.2 L1218 434.1 L1228.5 434.9 L1230 435.1 L1239.6 435.8 L1249.2 435.5 L1259.7 436 L1270.3 434.1 L1280.2 433 L1290.4 432 L1300.4 423 L1310.5 428.8 L1320.5 431.6 L1330.6 430.3 L1341.2 434.5 L1350.8 434.1 L1362.3 435.5 L1371.9 436.8 L1382.8 437 L1392.9 426.3 L1403.5 423.4 L1413.1 421.5 L1423.6 433 L1434.2 435.8 L1444.1 438 L1454.3 436.8 L1464.8 435.5 L1475.4 435.3 L1485 435.7 L1495.5 435.8 L1506 432.6 L1516 429.1 L1516 485.3 L1506 487.2 L1495.5 489.7 L1485 489.7 L1475.4 489.3 L1464.8 488.9 L1454.3 490.1 L1444.1 490.9 L1434.2 488.8 L1423.6 486.6 L1413.1 485.3 L1403.5 484.7 L1392.9 485.3 L1382.8 490.5 L1371.9 490.5 L1362.3 490.5 L1350.8 489.3 L1341.2 489.5 L1330.6 485.3 L1320.5 486.8 L1310.5 484.9 L1300.4 479 L1290.4 486.6 L1280.2 487.8 L1270.3 488.8 L1259.7 490.1 L1249.2 489.7 L1239.6 490.1 L1230 489.7 L1228.5 489.3 L1218 488.8 L1207.4 489.3 L1197.3 490.1 L1187.3 488.6 L1177.1 487.2 L1166.6 485.5 L1156.6 483.2 L1146.1 484.3 L1135.9 488.6 L1125.9 488.6 L1115.4 487.8 L1104.9 489.5 L1094.9 492.4 L1084.2 488.8 L1074.2 489.7 L1064.6 490.1 L1053.1 490.3 L1043.5 490.1 L1033 489.5 L1022.8 487.8 L1012.8 490.1 L1002.3 490.5 L991.8 490.5 L981.2 486.6 L971.6 483.8 L961.1 487.2 L950.5 487.8 L940 488.2 L929.9 486.6 L920.3 484.3 L908.8 484.3 L899.2 485.3 L889 490.5 L880 490.1 L870.4 489.1 L858.9 488.6 L847.4 487.2 L837.9 482.8 L828.3 486.6 L816.8 485.7 L807.2 489.1 L795.7 488.6 L786.1 487.2 L776.5 485.3 L766.9 488.6 L757.3 490.5 L745.8 491.6 L734.3 490.5 L724.8 488.6 L714.2 488.6 L703.7 489.1 L692.2 491.6 L680.7 489.7 L671.1 487.8 L659.6 488.6 L650 489.1 L642.7 490.1 L632.2 489.1 L621.7 488.2 L611.1 488.6 L601.5 486.3 L591.4 483.8 L582.4 485.9 L570.9 486.6 L549.8 486.3 L540.2 486.6 L530 483.2 L522.9 485.3 L511.4 487.4 L499.9 488.6 L490.4 488.6 L478.8 487.4 L467.3 486.3 L457.8 486.6 L448.2 488.6 L436.7 488.2 L417.5 487.2 L396.4 487.4 L376.3 487.8 L366 487.2 Z" fill="#434348" fill-opacity="0.750"/>
<path d="M366 538.4 L376.3 539.6 L396.4 539.2 L417.5 539 L436.7 539.9 L448.2 540.5 L457.8 538.4 L467.3 538 L478.8 539.4 L490.4 540.7 L499.9 540.7 L511.4 539.6 L522.9 537.3 L530 535.1 L540.2 539.2 L549.8 538.4 L570.9 538.6 L582.4 537.6 L591.4 535.5 L601.5 538 L611.1 540.3 L621.7 539.9 L632.2 540.9 L642.7 541.9 L650 540.9 L659.6 540.3 L671.1 539.6 L680.7 541.5 L692.2 543.4 L703.7 540.9 L714.2 540.3 L724.8 540.3 L734.3 542.2 L745.8 543.4 L757.3 542.2 L766.9 540.3 L776.5 537.1 L786.1 539 L795.7 540.3 L807.2 540.9 L816.8 537.4 L828.3 538.4 L837.9 534.6 L847.4 539 L858.9 540.3 L870.4 540.9 L880 541.9 L889 542.8 L899.2 538 L908.8 537.1 L920.3 537.4 L929.9 538.4 L940 540.3 L950.5 540.3 L961.1 539.6 L971.6 536.1 L981.2 539 L991.8 543 L1002.3 543 L1012.8 542.6 L1022.8 540.3 L1033 542.2 L1043.5 542.6 L1053.1 542.8 L1064.6 542.6 L1074.2 542.4 L1084.2 541.5 L1094.9 544.9 L1104.9 541.9 L1115.4 539.9 L1125.9 540.9 L1135.9 540.9 L1146.1 536.5 L1156.6 535.3 L1166.6 537.6 L1177.1 539.6 L1187.3 540.9 L1197.3 542.8 L1207.4 541.9 L1218 541.3 L1228.5 541.5 L1230 542.2 L1239.6 542.6 L1249.2 542.4 L1259.7 542.8 L1270.3 541.3 L1280.2 540.3 L1290.4 539.4 L1300.4 531.1 L1310.5 536.9 L1320.5 539.2 L1330.6 537.4 L1341.2 541.9 L1350.8 541.5 L1362.3 543 L1371.9 542.8 L1382.8 542.8 L1392.9 537.3 L1403.5 536.5 L1413.1 537.3 L1423.6 538.4 L1434.2 540.7 L1444.1 542.8 L1454.3 542.6 L1464.8 541.5 L1475.4 541.9 L1485 542.2 L1495.5 542.2 L1506 539.6 L1516 537.3" fill="none" stroke="#5c5c66" stroke-width="1" stroke-linejoin="round"/>
<path d="M366 487.2 L376.3 487.8 L396.4 487.4 L417.5 487.2 L436.7 488.2 L448.2 488.6 L457.8 486.6 L467.3 486.3 L478.8 487.4 L490.4 488.6 L499.9 488.6 L511.4 487.4 L522.9 485.3 L530 483.2 L540.2 486.6 L549.8 486.3 L570.9 486.6 L582.4 485.9 L591.4 483.8 L601.5 486.3 L611.1 488.6 L621.7 488.2 L632.2 489.1 L642.7 490.1 L650 489.1 L659.6 488.6 L671.1 487.8 L680.7 489.7 L692.2 491.6 L703.7 489.1 L714.2 488.6 L724.8 488.6 L734.3 490.5 L745.8 491.6 L757.3 490.5 L766.9 488.6 L776.5 485.3 L786.1 487.2 L795.7 488.6 L807.2 489.1 L816.8 485.7 L828.3 486.6 L837.9 482.8 L847.4 487.2 L858.9 488.6 L870.4 489.1 L880 490.1 L889 490.5 L899.2 485.3 L908.8 484.3 L920.3 484.3 L929.9 486.6 L940 488.2 L950.5 487.8 L961.1 487.2 L971.6 483.8 L981.2 486.6 L991.8 490.5 L1002.3 490.5 L1012.8 490.1 L1022.8 487.8 L1033 489.5 L1043.5 490.1 L1053.1 490.3 L1064.6 490.1 L1074.2 489.7 L1084.2 488.8 L1094.9 492.4 L1104.9 489.5 L1115.4 487.8 L1125.9 488.6 L1135.9 488.6 L1146.1 484.3 L1156.6 483.2 L1166.6 485.5 L1177.1 487.2 L1187.3 488.6 L1197.3 490.1 L1207.4 489.3 L1218 488.8 L1228.5 489.3 L1230 489.7 L1239.6 490.1 L1249.2 489.7 L1259.7 490.1 L1270.3 488.8 L1280.2 487.8 L1290.4 486.6 L1300.4 479 L1310.5 484.9 L1320.5 486.8 L1330.6 485.3 L1341.2 489.5 L1350.8 489.3 L1362.3 490.5 L1371.9 490.5 L1382.8 490.5 L1392.9 485.3 L1403.5 484.7 L1413.1 485.3 L1423.6 486.6 L1434.2 488.8 L1444.1 490.9 L1454.3 490.1 L1464.8 488.9 L1475.4 489.3 L1485 489.7 L1495.5 489.7 L1506 487.2 L1516 485.3" fill="none" stroke="#5c5c60" stroke-width="1" stroke-linejoin="round"/>
<path d="M366 430.1 L376.3 432 L385.9 431.6 L396.4 433 L406 428.2 L417.5 427 L426.1 429.3 L436.7 430.3 L448.2 430.7 L457.8 429.7 L467.3 430.7 L478.8 432.6 L490.4 434.1 L499.9 434.1 L511.4 432.2 L522.9 429.9 L530 428.4 L540.2 432.2 L549.8 431.1 L560.3 431.6 L570.9 431.6 L582.4 430.7 L591.4 429.1 L601.5 432.2 L611.1 434.5 L621.7 434.1 L632.2 436 L642.7 438 L650 433.9 L659.6 432.6 L671.1 431.2 L680.7 434.1 L692.2 436 L703.7 434.5 L714.2 434.1 L724.8 434.5 L734.3 436 L745.8 436.8 L757.3 436 L766.9 434.1 L776.5 430.1 L786.1 432.2 L795.7 434.1 L807.2 434.5 L816.8 430.1 L828.3 431.6 L837.9 428.2 L847.4 433 L858.9 434.5 L870.4 434.9 L880 435.8 L889 436.8 L899.2 431.2 L908.8 430.7 L920.3 430.7 L929.9 434.5 L940 432 L950.5 432.6 L961.1 430.7 L971.6 429.7 L981.2 432.2 L991.8 436.4 L1002.3 436 L1012.8 435.5 L1022.8 433.2 L1033 434.9 L1043.5 435.5 L1053.1 435.7 L1064.6 435.3 L1074.2 435.5 L1084.2 434.5 L1094.9 437.8 L1104.9 434.9 L1115.4 433.4 L1125.9 434.1 L1135.9 435.7 L1146.1 425.9 L1156.6 424.5 L1166.6 423.4 L1177.1 426.8 L1187.3 434.5 L1197.3 437 L1207.4 433.2 L1218 434.1 L1228.5 434.9 L1230 435.1 L1239.6 435.8 L1249.2 435.5 L1259.7 436 L1270.3 434.1 L1280.2 433 L1290.4 432 L1300.4 423 L1310.5 428.8 L1320.5 431.6 L1330.6 430.3 L1341.2 434.5 L1350.8 434.1 L1362.3 435.5 L1371.9 436.8 L1382.8 437 L1392.9 426.3 L1403.5 423.4 L1413.1 421.5 L1423.6 433 L1434.2 435.8 L1444.1 438 L1454.3 436.8 L1464.8 435.5 L1475.4 435.3 L1485 435.7 L1495.5 435.8 L1506 432.6 L1516 429.1" fill="none" stroke="#5e5e62" stroke-width="1" stroke-linejoin="round"/>
<path d="M366 587.9 H1516" stroke="#57575b" stroke-width="2.300"/>
<path d="M366 628.500 H1516" stroke="#c0d0e0" stroke-width="1"/>
<path d="M427.5 628 V638" stroke="#c0d0e0" stroke-width="1"/>
<text x="427.5" y="647" text-anchor="middle" font-size="10.600" fill="#444">29. Sep</text>
<path d="M509.5 628 V638" stroke="#c0d0e0" stroke-width="1"/>
<text x="509.7" y="647" text-anchor="middle" font-size="10.600" fill="#444">08:00</text>
<path d="M591.5 628 V638" stroke="#c0d0e0" stroke-width="1"/>
<text x="591.9" y="647" text-anchor="middle" font-size="10.600" fill="#444">16:00</text>
<path d="M673.5 628 V638" stroke="#c0d0e0" stroke-width="1"/>
<text x="674.1" y="647" text-anchor="middle" font-size="10.600" fill="#444">30. Sep</text>
<path d="M755.5 628 V638" stroke="#c0d0e0" stroke-width="1"/>
<text x="756.3" y="647" text-anchor="middle" font-size="10.600" fill="#444">08:00</text>
<path d="M838.5 628 V638" stroke="#c0d0e0" stroke-width="1"/>
<text x="838.5" y="647" text-anchor="middle" font-size="10.600" fill="#444">16:00</text>
<path d="M920.5 628 V638" stroke="#c0d0e0" stroke-width="1"/>
<text x="920.7" y="647" text-anchor="middle" font-size="10.600" fill="#444">1. Oct</text>
<path d="M1002.5 628 V638" stroke="#c0d0e0" stroke-width="1"/>
<text x="1002.9" y="647" text-anchor="middle" font-size="10.600" fill="#444">08:00</text>
<path d="M1084.5 628 V638" stroke="#c0d0e0" stroke-width="1"/>
<text x="1085.1" y="647" text-anchor="middle" font-size="10.600" fill="#444">16:00</text>
<path d="M1166.5 628 V638" stroke="#c0d0e0" stroke-width="1"/>
<text x="1167.3" y="647" text-anchor="middle" font-size="10.600" fill="#444">2. Oct</text>
<path d="M1249.5 628 V638" stroke="#c0d0e0" stroke-width="1"/>
<text x="1249.5" y="647" text-anchor="middle" font-size="10.600" fill="#444">08:00</text>
<path d="M1331.5 628 V638" stroke="#c0d0e0" stroke-width="1"/>
<text x="1331.7" y="647" text-anchor="middle" font-size="10.600" fill="#444">16:00</text>
<path d="M1413.5 628 V638" stroke="#c0d0e0" stroke-width="1"/>
<text x="1413.9" y="647" text-anchor="middle" font-size="10.600" fill="#444">3. Oct</text>
<path d="M1495.5 628 V638" stroke="#c0d0e0" stroke-width="1"/>
<text x="1496.1" y="647" text-anchor="middle" font-size="10.600" fill="#444">08:00</text>
<circle cx="889" cy="436.800" r="10" fill="#7f8ea8" fill-opacity="0.550"/>
<path d="M889 432.500 L893.300 436.800 L889 441.100 L884.700 436.800 Z" fill="#434348" stroke="#666" stroke-width="1"/>
<circle cx="889" cy="490" r="10" fill="#90ed7d" fill-opacity="0.120"/>
<rect x="885" y="486" width="8" height="8" fill="#90ed7d" stroke="#5f6a5c" stroke-width="1.300"/>
<circle cx="889" cy="543" r="10" fill="#8085e9" fill-opacity="0.180"/>
<path d="M884.500 539.500 H893.500 L889 547.500 Z" fill="#8085e9" stroke="#5d5f78" stroke-width="1.300"/>
<circle cx="889" cy="588" r="10" fill="#f15c80" fill-opacity="0.200"/>
<circle cx="889" cy="588" r="4" fill="#f15c80" stroke="#66565c" stroke-width="1.500"/>
<rect x="602.500" y="507" width="273" height="118" rx="3" fill="#000" fill-opacity="0.050"/>
<rect x="602" y="506.500" width="273" height="118" rx="3" fill="#000" fill-opacity="0.060"/>
<rect x="601.500" y="505.500" width="273" height="118" rx="3" fill="#f9f9f9" fill-opacity="0.860" stroke="#7cb5ec" stroke-width="1"/>
<text x="609" y="524.500" font-size="10" letter-spacing="0.250" fill="#333">Friday, Sep 30, 21:00</text>
<text x="609" y="539.5" font-size="12" fill="#7cb5ec">shirkae2670-</text>
<text x="812.5" y="539.5" font-size="12" font-weight="bold" fill="#333">0 Watt</text>
<text x="609" y="554.5" font-size="12" fill="#434348">shirkae2670-</text>
<text x="809.5" y="554.5" font-size="12" font-weight="bold" fill="#333">: 248 Watt</text>
<text x="609" y="569.5" font-size="12" fill="#90ed7d">shirkae2670-</text>
<text x="809.5" y="569.5" font-size="12" font-weight="bold" fill="#333">: 248 Watt</text>
<text x="609" y="584.5" font-size="12" fill="#f7a35c">shirkae2670-</text>
<text x="812.5" y="584.5" font-size="12" font-weight="bold" fill="#333">0 Watt</text>
<text x="609" y="599.5" font-size="12" fill="#8085e9">shirkae2670-</text>
<text x="809.5" y="599.5" font-size="12" font-weight="bold" fill="#333">: 214 Watt</text>
<text x="609" y="614.5" font-size="12" fill="#f15c80">shirkae2670-lab-milwaukee-transcon...</text>
<text x="812.5" y="614.5" font-size="12" font-weight="bold" fill="#333">187 Watt</text>
<rect x="678.200" y="526.500" width="132.500" height="87.500" fill="#fff"/>
<rect x="379.500" y="676" width="1122" height="39.500" fill="#d9e8f9"/>
<rect x="379.500" y="695" width="1122" height="20.500" fill="#7cb5ec" fill-opacity="0.070"/>
<path d="M439.5 676 V715" stroke="#c5d3e4" stroke-width="1"/>
<path d="M680 676 V715" stroke="#c5d3e4" stroke-width="1"/>
<path d="M920.5 676 V715" stroke="#c5d3e4" stroke-width="1"/>
<path d="M1161 676 V715" stroke="#c5d3e4" stroke-width="1"/>
<path d="M1401.5 676 V715" stroke="#c5d3e4" stroke-width="1"/>
<text x="443" y="711" font-size="10.600" fill="#888">29. Sep</text>
<text x="683.5" y="711" font-size="10.600" fill="#888">30. Sep</text>
<text x="924" y="711" font-size="10.600" fill="#888">1. Oct</text>
<text x="1164.5" y="711" font-size="10.600" fill="#888">2. Oct</text>
<text x="1405" y="711" font-size="10.600" fill="#888">3. Oct</text>
<path d="M379.500 694.800 H1501.500" stroke="#7fa9dc" stroke-width="1.600"/>
<path d="M366 675.500 H1516 M379.500 675.500 V715.500 M1501.500 675.500 V715.500" fill="none" stroke="#b2b1b6" stroke-width="1"/>
<rect x="365.500" y="715.500" width="1150" height="14" fill="#bfc8d1"/>
<path d="M365.500 729.500 H1515.500" stroke="#b4b4b8" stroke-width="1"/>
<rect x="365.500" y="715.500" width="14" height="14" fill="#ebe7e8" stroke="#bbbbbb"/><rect x="1501.500" y="715.500" width="14" height="14" fill="#ebe7e8" stroke="#bbbbbb"/>
<path d="M374 719.500 V725.500 L371 722.500 Z M1507 719.500 V725.500 L1510 722.500 Z" fill="#444"/>
<path d="M937.500 720 V725 M940.500 720 V725 M943.500 720 V725" stroke="#555" stroke-width="1"/>
<rect x="375.5" y="687.500" width="8" height="15" fill="#ebe7e8" stroke="#b2b1b6"/>
<path d="M378.5 691.500 V699.500 M380.5 691.500 V699.500" stroke="#b2b1b6" stroke-width="1"/>
<rect x="1497.5" y="687.500" width="8" height="15" fill="#ebe7e8" stroke="#b2b1b6"/>
<path d="M1500.5 691.500 V699.500 M1502.5 691.500 V699.500" stroke="#b2b1b6" stroke-width="1"/>
<rect x="406" y="746" width="16" height="12" fill="#7cb5ec"/>
<text x="427" y="757" font-size="12" font-weight="bold" letter-spacing="0.150" fill="#333">shirkae2670<tspan font-weight="normal" font-size="9" fill="#666">·</tspan></text>
<rect x="655" y="746" width="16" height="12" fill="#434348"/>
<text x="676" y="757" font-size="12" font-weight="bold" letter-spacing="0.150" fill="#333">shirkae2670<tspan fill="#444">-</tspan></text>
<rect x="907" y="746" width="16" height="12" fill="#90ed7d"/>
<text x="928" y="757" font-size="12" font-weight="bold" letter-spacing="0.150" fill="#333">shirkae2670</text>
<rect x="1159" y="746" width="16" height="12" fill="#f7a35c"/>
<text x="1180" y="757" font-size="12" font-weight="bold" letter-spacing="0.150" fill="#333">shirkae2670<tspan font-weight="normal" font-size="9" fill="#666">·</tspan></text>
<rect x="406" y="760" width="16" height="12" fill="#8085e9"/>
<text x="427" y="771" font-size="12" font-weight="bold" letter-spacing="0.150" fill="#333">shirkae2670<tspan font-weight="normal" font-size="9" fill="#666">·</tspan></text>
<rect x="658" y="760" width="16" height="12" fill="#f15c80"/>
<text x="679" y="771" font-size="12" font-weight="bold" letter-spacing="0.150" fill="#333">shirkae2670</text>
</svg>

<div class="foot" style="top:945px;color:#a9a9a9;font-size:12.500px">Contact</div>
<div class="foot" style="top:961px">2016 © EasyVirt</div>
<div class="foot" style="top:978px;letter-spacing:0.18px">Release: 3.1.1 Build: 1492_160928</div>

<div id="frame2"></div>
<div id="frame"></div>
</body>
</html>
